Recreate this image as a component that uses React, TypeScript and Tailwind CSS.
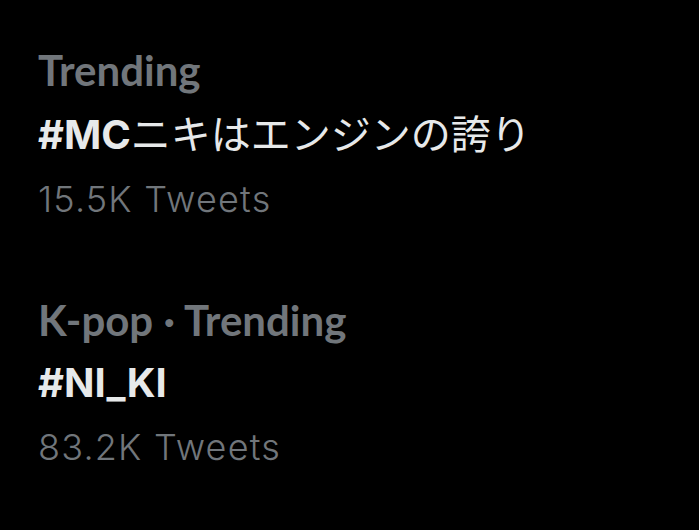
export default function App() {
  const label = "text-[#71767b] font-bold text-[42px] leading-[61.5px] whitespace-nowrap font-['Lato',sans-serif]";
  const title = "text-[#e7e9ea] leading-[61.5px] whitespace-nowrap";
  const tag = "font-bold text-[40px] font-['Inter',sans-serif]";
  const count = "-mt-[5px] text-[#71767b] font-light text-[36px] tracking-[1.2px] leading-[61.5px] whitespace-nowrap font-['Inter',sans-serif]";
  return (
    <div className="w-[699px] h-[530px] bg-black overflow-hidden pl-[38px] pt-[40px]">
      <div className="flex flex-col">
        <div className={label}>Trending</div>
        <div className={title}>
          <span className={tag}>#MC</span>
          <span className="text-[40px] font-['Noto_Sans_CJK_JP',sans-serif]">ニキはエンジンの誇り</span>
        </div>
        <div className={count}>15.5K Tweets</div>
        <div className="h-[59.5px]" />
        <div className={label}>K-pop · Trending</div>
        <div className={title}>
          <span className={tag}>#NI_KI</span>
        </div>
        <div className={count}>83.2K Tweets</div>
      </div>
    </div>
  );
}
